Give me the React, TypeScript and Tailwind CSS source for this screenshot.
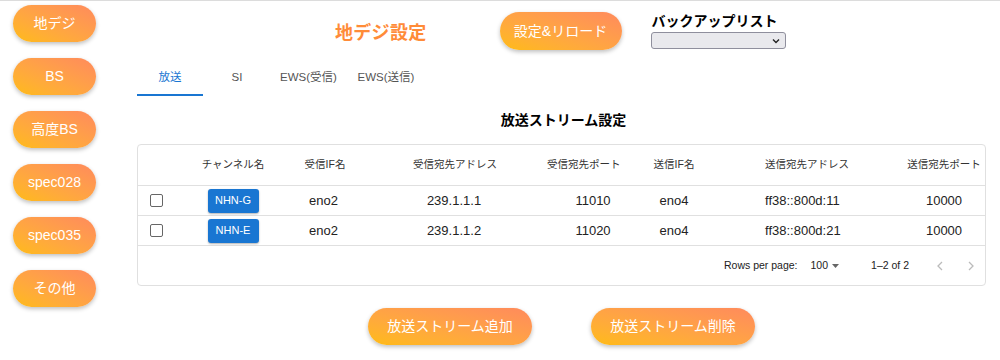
import { useState } from 'react';

const FONT = { fontFamily: '"Liberation Sans", "Noto Sans CJK JP", sans-serif' };
const ORANGE_BTN =
  'bg-linear-to-tr from-[#ffbb0e] to-[#ff8a5c] text-white rounded-full shadow-[0_2px_4px_rgba(0,0,0,0.25)] flex items-center justify-center';

const sideItems = ['地デジ', 'BS', '高度BS', 'spec028', 'spec035', 'その他'];
const tabs = [
  { label: '放送', w: 'w-[66px]' },
  { label: 'SI', w: 'w-[68px]' },
  { label: 'EWS(受信)', w: 'w-[75px]' },
  { label: 'EWS(送信)', w: 'w-[80px]' },
];

const rows = [
  { ch: 'NHN-G', rif: 'eno2', raddr: '239.1.1.1', rport: '11010', sif: 'eno4', saddr: 'ff38::800d:11', sport: '10000' },
  { ch: 'NHN-E', rif: 'eno2', raddr: '239.1.1.2', rport: '11020', sif: 'eno4', saddr: 'ff38::800d:21', sport: '10000' },
];

const GRID = 'grid grid-cols-[43px_104px_80px_182px_84px_86px_184px_86px]';

export default function App() {
  const [tab, setTab] = useState(0);

  return (
    <div className="w-[1000px] h-[360px] bg-white border-t border-[#dcdcdc] flex text-[#222]" style={FONT}>
      {/* サイドメニュー */}
      <div className="w-[137px] shrink-0 pl-[13px] pt-[4px] flex flex-col gap-[16px]">
        {sideItems.map((s) => (
          <button key={s} className={`${ORANGE_BTN} w-[83px] h-[37px] text-[14px]`}>
            {s}
          </button>
        ))}
      </div>

      <div className="w-[849px] flex flex-col">
        {/* ヘッダー */}
        <div className="flex h-[60px]">
          <div className="ml-[198px] mt-[19px] text-[18px] font-bold text-[#ff8b38] tracking-[0.3px]">地デジ設定</div>
          <button className={`${ORANGE_BTN} ml-[73px] mt-[11px] w-[122px] h-[38px] text-[14px]`}>設定&amp;リロード</button>
          <div className="ml-[30px] mt-[11px] flex flex-col">
            <div className="text-[14px] font-bold leading-[18px] text-black">バックアップリスト</div>
            <div className="mt-[2px] -ml-[1px] w-[135px] h-[17px] bg-[#e9e9ed] border border-[#8f8f9d] rounded-[3px] flex items-center justify-end pr-[5px]">
              <svg width="8" height="6" viewBox="0 0 8 6">
                <path d="M1 1.5 L4 4.5 L7 1.5" fill="none" stroke="#222" strokeWidth="1.4" />
              </svg>
            </div>
          </div>
        </div>

        {/* タブ */}
        <div className="flex h-[35px]">
          {tabs.map((t, i) => (
            <button
              key={t.label}
              onClick={() => setTab(i)}
              className={`${t.w} h-full flex items-center justify-center text-[11.5px] border-b-2 ${
                tab === i ? 'text-[#1976d2] border-[#1976d2]' : 'text-[#555] border-transparent'
              }`}
            >
              {t.label}
            </button>
          ))}
        </div>

        <div className="mt-[14px] text-center text-[14px] font-bold text-black leading-[20px] pl-[4px]">放送ストリーム設定</div>

        {/* テーブル */}
        <div className="mt-[14px] border border-[#e0e0e0] rounded-[4px] flex flex-col">
          <div className={`${GRID} h-[41px] items-center text-[10.5px] text-[#333] border-b border-[#e0e0e0] whitespace-nowrap`}>
            <div />
            <div className="text-center">チャンネル名</div>
            <div className="text-center">受信IF名</div>
            <div className="text-center pr-[2px]">受信宛先アドレス</div>
            <div className="text-center pr-[14px]">受信宛先ポート</div>
            <div className="text-center">送信IF名</div>
            <div className="pl-[48px]">送信宛先アドレス</div>
            <div className="text-center">送信宛先ポート</div>
          </div>
          {rows.map((r) => (
            <div key={r.ch} className={`${GRID} h-[30px] items-center text-[13px] text-[#222] border-b border-[#e0e0e0] whitespace-nowrap`}>
              <div className="pl-[12px] flex items-center">
                <span className="w-[13px] h-[13px] border-[1.5px] border-[#666] rounded-[2px]" />
              </div>
              <div className="flex justify-center">
                <span className="w-[51px] h-[24px] bg-[#1976d2] text-white text-[11px] rounded-[3px] flex items-center justify-center shadow-[0_1px_2px_rgba(0,0,0,0.3)]">
                  {r.ch}
                </span>
              </div>
              <div className="text-center pr-[3px]">{r.rif}</div>
              <div className="text-center pr-[4px]">{r.raddr}</div>
              <div className="text-center pl-[8px]">{r.rport}</div>
              <div className="text-center">{r.sif}</div>
              <div className="pl-[48px]">{r.saddr}</div>
              <div className="text-center">{r.sport}</div>
            </div>
          ))}
          <div className="h-[39px] flex items-center justify-end text-[10.5px] text-[#222] pr-[11px]">
            <span>Rows per page:</span>
            <span className="ml-[13px]">100</span>
            <svg className="ml-[4px]" width="7" height="4" viewBox="0 0 7 4">
              <path d="M0 0 L7 0 L3.5 4 Z" fill="#666" />
            </svg>
            <span className="ml-[32px]">1–2 of 2</span>
            <svg className="ml-[28px]" width="6" height="10" viewBox="0 0 6 10">
              <path d="M5 1 L1 5 L5 9" fill="none" stroke="#bbb" strokeWidth="1.3" />
            </svg>
            <svg className="ml-[25px]" width="6" height="10" viewBox="0 0 6 10">
              <path d="M1 1 L5 5 L1 9" fill="none" stroke="#bbb" strokeWidth="1.3" />
            </svg>
          </div>
        </div>

        {/* 操作ボタン */}
        <div className="mt-[22px] flex">
          <button className={`${ORANGE_BTN} ml-[231px] w-[164px] h-[37px] text-[14px]`}>放送ストリーム追加</button>
          <button className={`${ORANGE_BTN} ml-[59px] w-[164px] h-[37px] text-[14px]`}>放送ストリーム削除</button>
        </div>
      </div>
    </div>
  );
}
